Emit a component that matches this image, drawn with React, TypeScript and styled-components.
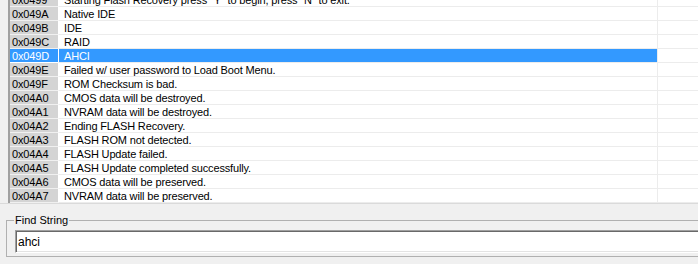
import React, { useState } from "react";
import styled, { createGlobalStyle } from "styled-components";

interface StringRow {
  id: string;
  text: string;
}

const rows: StringRow[] = [
  { id: "0x0499", text: 'Starting Flash Recovery press "Y" to begin, press "N" to exit.' },
  { id: "0x049A", text: "Native IDE" },
  { id: "0x049B", text: "IDE" },
  { id: "0x049C", text: "RAID" },
  { id: "0x049D", text: "AHCI" },
  { id: "0x049E", text: "Failed w/ user password to Load Boot Menu." },
  { id: "0x049F", text: "ROM Checksum is bad." },
  { id: "0x04A0", text: "CMOS data will be destroyed." },
  { id: "0x04A1", text: "NVRAM data will be destroyed." },
  { id: "0x04A2", text: "Ending FLASH Recovery." },
  { id: "0x04A3", text: "FLASH ROM not detected." },
  { id: "0x04A4", text: "FLASH Update failed." },
  { id: "0x04A5", text: "FLASH Update completed successfully." },
  { id: "0x04A6", text: "CMOS data will be preserved." },
  { id: "0x04A7", text: "NVRAM data will be preserved." },
];

const App = () => {
  const [selected, setSelected] = useState<string>("0x049D");
  const [query, setQuery] = useState<string>("ahci");

  return (
    <>
      <GlobalStyle />
      <Window>
        <GridView>
          <GridBody>
            {rows.map((row) => (
              <Row key={row.id} onClick={() => setSelected(row.id)}>
                <RowHeader />
                <IdCell $selected={selected === row.id}>{row.id}</IdCell>
                <TextCell $selected={selected === row.id}>{row.text}</TextCell>
                <FillerCell />
              </Row>
            ))}
          </GridBody>
        </GridView>
        <BottomPanel>
          <GroupBox>
            <legend>Find String</legend>
            <FindInput
              type="text"
              value={query}
              onChange={(e) => setQuery(e.target.value)}
            />
          </GroupBox>
        </BottomPanel>
      </Window>
    </>
  );
};

export default App;

const GlobalStyle = createGlobalStyle`
  html, body {
    margin: 0;
    padding: 0;
    background: #f0f0f0;
    overflow: hidden;
  }

  body {
    font-family: "Liberation Sans", Arial, sans-serif;
    font-size: 11px;
    color: #000;
  }
`;

const Window = styled.div`
  width: 698px;
  height: 264px;
  display: flex;
  flex-direction: column;
  overflow: hidden;
`;

const GridView = styled.div`
  height: 203px;
  overflow: hidden;
  background: #fff;
  border-bottom: 1px solid #dadada;
  flex-shrink: 0;
`;

// list is scrolled a few pixels, so the first row is half hidden
const GridBody = styled.div`
  margin-top: -7px;
`;

const Row = styled.div`
  display: grid;
  grid-template-columns: 10px 48px 600px 1fr;
  height: 14px;
  cursor: default;
`;

const RowHeader = styled.div`
  background: #f0f0f0;
  border-right: 2px solid #a0a0a0;
  box-sizing: border-box;
  width: 10px;
`;

const IdCell = styled.div<{ $selected: boolean }>`
  background: ${(p) => (p.$selected ? "#3399ff" : "#d4d4d4")};
  color: ${(p) => (p.$selected ? "#fff" : "#000")};
  border-bottom: 1px solid ${(p) => (p.$selected ? "#fff" : "#f0f0f0")};
  padding-left: 2px;
  line-height: 14px;
  letter-spacing: -0.15px;
  white-space: nowrap;
  overflow: hidden;
`;

const TextCell = styled.div<{ $selected: boolean }>`
  background: ${(p) => (p.$selected ? "#3399ff" : "#fff")};
  color: ${(p) => (p.$selected ? "#fff" : "#000")};
  border-left: 1px solid #fff;
  border-right: 1px solid #ececec;
  border-bottom: 1px solid #ececec;
  padding-left: 5px;
  line-height: 14px;
  letter-spacing: -0.15px;
  white-space: nowrap;
  overflow: hidden;
`;

const FillerCell = styled.div`
  background: #fff;
  border-bottom: 1px solid #ececec;
`;

const BottomPanel = styled.div`
  flex: 1;
  padding: 9px 0 0 6px;
`;

const GroupBox = styled.fieldset`
  margin: 0 -20px 0 0;
  padding: 3px 0 3px 8px;
  border: 1px solid #b0b0b0;
  border-radius: 0;
  min-width: 0;

  legend {
    padding: 0 1px;
    margin-left: -1px;
    font-size: 11px;
    line-height: 14px;
    color: #000;
  }
`;

const FindInput = styled.input`
  display: block;
  box-sizing: border-box;
  width: calc(100% + 20px);
  height: 23px;
  margin: 0;
  padding: 0 0 0 2px;
  border: 1px solid;
  border-color: #a0a0a0 #fff #fff #a0a0a0;
  box-shadow: inset 1px 1px 0 #696969, inset -1px -1px 0 #e3e3e3;
  background: #fff;
  font-family: "Liberation Sans", Arial, sans-serif;
  font-size: 12px;
  color: #000;
  outline: none;
`;
